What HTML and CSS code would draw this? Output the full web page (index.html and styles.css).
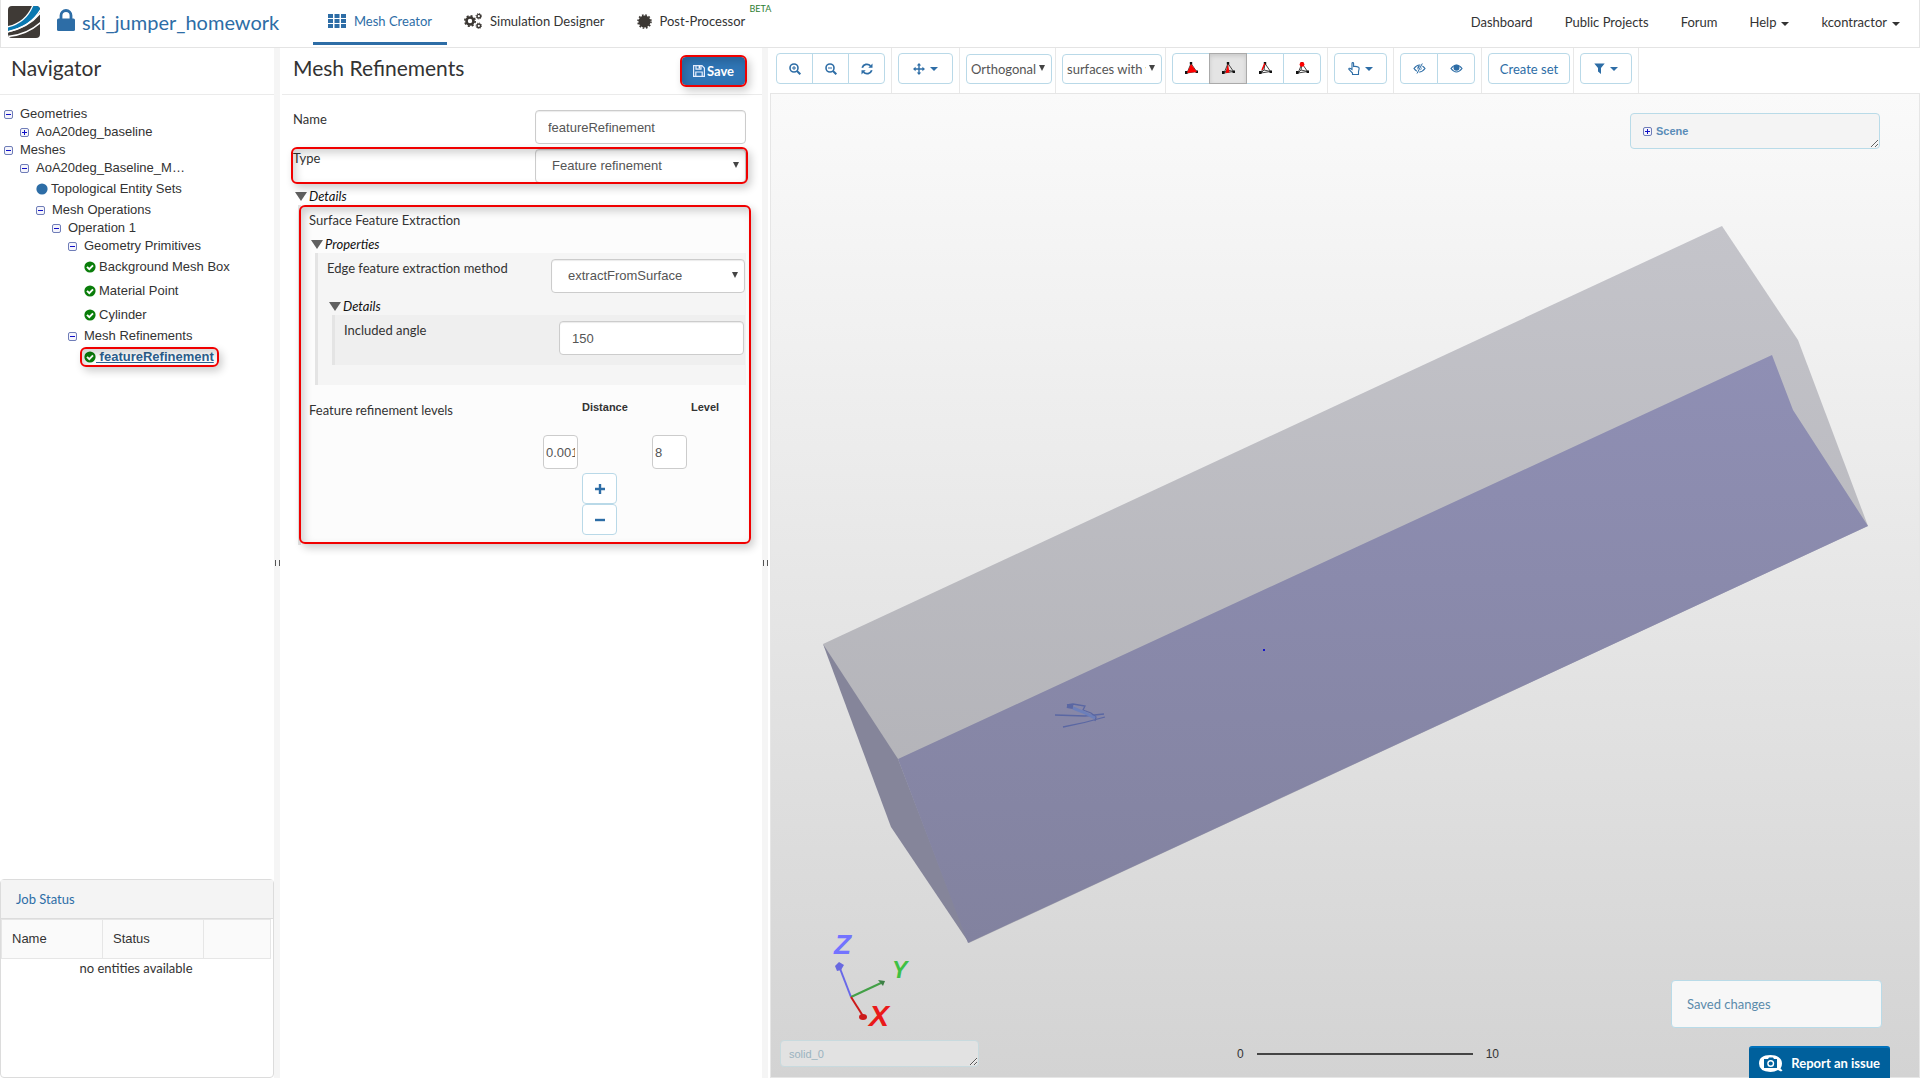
FILE: index.html
```html
<!DOCTYPE html>
<html lang="en">
<head>
<meta charset="utf-8">
<title>ski_jumper_homework - Mesh Creator</title>
<link rel="stylesheet" href="styles.css">
</head>
<body>
<svg class="defs" width="0" height="0" aria-hidden="true">
  <defs>
    <symbol id="check" viewBox="0 0 12 12"><circle cx="6" cy="6" r="5.6" fill="#0a7d0a"/><path d="M3 5.8l2.3 2.4L9 4.4" fill="none" stroke="#fff" stroke-width="1.9"/></symbol>
    <symbol id="minus-box" viewBox="0 0 9 9"><rect x=".5" y=".5" width="8" height="8" rx="1.5" fill="#f4f4fb" stroke="#6f7db8"/><path d="M2 4.5h5" stroke="#1010c8"/></symbol>
    <symbol id="plus-box" viewBox="0 0 9 9"><rect x=".5" y=".5" width="8" height="8" rx="1.5" fill="#f4f4fb" stroke="#6f7db8"/><path d="M2 4.5h5M4.500 2v5" stroke="#1010c8"/></symbol>
    <symbol id="tetra" viewBox="0 0 13 13"><path d="M6 1.500L2 11l9.500-1.500zM2 11l3-3 6.500 1.500M6 1.500L5 8" fill="none" stroke="#444" stroke-width="1"/><path d="M0 9h2.500v3H0zM10.500 8.500H13v2.500h-2.500zM4.800 0h2.400v2.500H4.800z" fill="#111"/></symbol>
  </defs>
</svg>

<header class="topbar">
  <a class="brand" href="#" aria-label="Home">
    <svg width="32" height="32" viewBox="0 0 32 32"><defs><clipPath id="logo-clip"><rect width="32" height="32" rx="4"/></clipPath></defs><g clip-path="url(#logo-clip)"><path fill="#3f3a36" d="M0 0h32v32H0z"/><path fill="#0a78b0" stroke="#fff" stroke-width="1.300" d="M-1 21Q18 17 25-1H34V1Q24 21-1 26z"/><path fill="none" stroke="#fff" stroke-width="1.500" d="M-1 26Q22 21 33 6M-1 30.500Q19 29 33 16"/></g></svg>
  </a>
  <a class="project" href="#">
    <svg width="18" height="22" viewBox="0 0 18 22"><path d="M4 11V6.500a5 5 0 0 1 10 0V11" fill="none" stroke="#2d6da6" stroke-width="2.800"/><rect y="9.500" width="18" height="12.500" rx="1.500" fill="#2d6da6"/></svg>
    <span>ski_jumper_homework</span>
  </a>
  <nav class="tabs">
    <a class="tab active" href="#"><svg width="18" height="14" viewBox="0 0 18 14"><path fill="#2d6da6" d="M0 0h5v4H0zM6.500 0h5v4h-5zM13 0h5v4h-5zM0 5h5v4H0zM6.500 5h5v4h-5zM13 5h5v4h-5zM0 10h5v4H0zM6.500 10h5v4h-5zM13 10h5v4h-5z"/></svg>Mesh Creator</a>
    <a class="tab" href="#"><svg width="18" height="16" viewBox="0 0 18 16"><g fill="none" stroke="#3b3733"><circle cx="6" cy="8" r="3.500" stroke-width="2.600"/><circle cx="6" cy="8" r="5.200" stroke-width="1.600" stroke-dasharray="2.040"/><circle cx="14.800" cy="3.200" r="1.800" stroke-width="1.400"/><circle cx="14.800" cy="3.200" r="2.800" stroke-width=".9" stroke-dasharray="1.100"/><circle cx="14.800" cy="12.800" r="1.800" stroke-width="1.400"/><circle cx="14.800" cy="12.800" r="2.800" stroke-width=".9" stroke-dasharray="1.100"/></g></svg>Simulation Designer</a>
    <a class="tab" href="#"><svg width="15" height="15" viewBox="0 0 15 15"><circle cx="7.500" cy="7.500" r="6" fill="#3b3733"/><circle cx="7.500" cy="7.500" r="6.500" fill="none" stroke="#3b3733" stroke-width="1.600" stroke-dasharray="1.700"/></svg>Post-Processor<small class="beta">BETA</small></a>
  </nav>
  <nav class="links">
    <a href="#">Dashboard</a><a href="#">Public Projects</a><a href="#">Forum</a>
    <a href="#">Help<i class="caret"></i></a><a href="#">kcontractor<i class="caret"></i></a>
  </nav>
</header>

<main class="workspace">
  <aside class="navigator">
    <h1 class="title">Navigator</h1>
    <ul class="tree">
      <li class="l0"><svg class="tg"><use href="#minus-box"/></svg>Geometries</li>
      <li class="l1"><svg class="tg"><use href="#plus-box"/></svg>AoA20deg_baseline</li>
      <li class="l0"><svg class="tg"><use href="#minus-box"/></svg>Meshes</li>
      <li class="l1"><svg class="tg"><use href="#minus-box"/></svg>AoA20deg_Baseline_M…</li>
      <li class="l2 leaf"><svg class="ck" viewBox="0 0 12 12"><circle cx="6" cy="6" r="5.600" fill="#2d6da6"/></svg>Topological Entity Sets</li>
      <li class="l2"><svg class="tg"><use href="#minus-box"/></svg>Mesh Operations</li>
      <li class="l3"><svg class="tg"><use href="#minus-box"/></svg>Operation 1</li>
      <li class="l4"><svg class="tg"><use href="#minus-box"/></svg>Geometry Primitives</li>
      <li class="l5 leaf"><svg class="ck"><use href="#check"/></svg>Background Mesh Box</li>
      <li class="l5 leaf"><svg class="ck"><use href="#check"/></svg>Material Point</li>
      <li class="l5 leaf"><svg class="ck"><use href="#check"/></svg>Cylinder</li>
      <li class="l4"><svg class="tg"><use href="#minus-box"/></svg>Mesh Refinements</li>
      <li class="l5 leaf"><a class="current marked" href="#"><svg class="ck"><use href="#check"/></svg><span>&nbsp;featureRefinement</span></a></li>
    </ul>
    <section class="jobs">
      <h2>Job Status</h2>
      <table>
        <thead><tr><th class="wide">Name</th><th class="wide">Status</th><th></th></tr></thead>
        <tbody><tr><td colspan="3">no entities available</td></tr></tbody>
      </table>
    </section>
  </aside>
  <div class="splitter"></div>

  <section class="editor">
    <div class="title bar"><h1>Mesh Refinements</h1>
      <button class="save marked"><svg width="12" height="12" viewBox="0 0 12 12"><path d="M.6.600h8.400l2.400 2.400v8.400H.6zM3 .6v3.600h5V.6M2.800 11.400V7h6.400v4.400" fill="none" stroke="#e8f0ff" stroke-width="1.200"/><path d="M5.600 1h1.600v2.500H5.600z" fill="#fff"/></svg>Save</button>
    </div>
    <form class="form">
      <div class="row"><label for="name">Name</label><input class="ctl" id="name" value="featureRefinement"></div>
      <div class="row type marked"><label for="type">Type</label><span class="select ctl"><select id="type"><option>Feature refinement</option></select></span></div>
      <div class="fold first">Details</div>
      <div class="block outer marked">
        <div class="text">Surface Feature Extraction</div>
        <div class="fold">Properties</div>
        <div class="block mid">
          <div class="row"><label for="method">Edge feature extraction method</label><span class="select ctl"><select id="method"><option>extractFromSurface</option></select></span></div>
          <div class="fold first">Details</div>
          <div class="block inner">
            <div class="row"><label for="angle">Included angle</label><input class="ctl" id="angle" value="150"></div>
          </div>
        </div>
        <div class="levels">
          <div class="text">Feature refinement levels</div>
          <table>
            <thead><tr><th>Distance</th><th>Level</th></tr></thead>
            <tbody>
              <tr><td><input class="tiny" aria-label="Distance" value="0.001"></td><td><input class="tiny" aria-label="Level" value="8"></td></tr>
              <tr><td colspan="2" class="steps">
                <button type="button" class="btn" aria-label="Add row"><svg width="10" height="10" viewBox="0 0 10 10"><path d="M0 5h10M5 0v10" stroke="#2d6da6" stroke-width="2.400"/></svg></button>
                <button type="button" class="btn" aria-label="Remove row"><svg width="10" height="10" viewBox="0 0 10 10"><path d="M0 5h10" stroke="#2d6da6" stroke-width="2.400"/></svg></button>
              </td></tr>
            </tbody>
          </table>
        </div>
      </div>
    </form>
  </section>
  <div class="splitter"></div>

  <section class="viewer">
    <div class="tools">
      <div class="set"><div class="group zooms">
        <button class="btn" aria-label="Zoom in"><svg width="12" height="12" viewBox="0 0 12 12"><g fill="none" stroke="#2d6da6"><circle cx="5" cy="5" r="4" stroke-width="1.600"/><path d="M8 8l3.300 3.300" stroke-width="2"/><path d="M3 5h4M5 3v4"/></g></svg></button>
        <button class="btn" aria-label="Zoom out"><svg width="12" height="12" viewBox="0 0 12 12"><g fill="none" stroke="#2d6da6"><circle cx="5" cy="5" r="4" stroke-width="1.600"/><path d="M8 8l3.300 3.300" stroke-width="2"/><path d="M3 5h4"/></g></svg></button>
        <button class="btn" aria-label="Refresh"><svg width="12" height="12" viewBox="0 0 12 12"><path d="M1.200 4.700A5 5 0 0 1 9.500 2.800M10.800 7.300A5 5 0 0 1 2.500 9.200" fill="none" stroke="#2d6da6" stroke-width="1.800"/><path d="M11.500.500v4.200H7.300zM.5 11.500V7.300h4.200z" fill="#2d6da6"/></svg></button>
      </div></div>
      <div class="set"><button class="btn move" aria-label="Move"><svg width="12" height="12" viewBox="0 0 12 12"><path d="M6 2v8M2 6h8" stroke="#2d6da6" stroke-width="1.400"/><path d="M6 0l2.200 2.600H3.800zM6 12l2.200-2.600H3.800zM0 6l2.600-2.200v4.400zM12 6L9.400 3.800v4.400z" fill="#2d6da6"/></svg><i class="caret"></i></button></div>
      <div class="set tight"><span class="select pick"><select aria-label="Projection"><option>Orthogonal</option></select></span></div>
      <div class="set tight"><span class="select pick long"><select aria-label="Render mode"><option>surfaces with vertices</option></select></span></div>
      <div class="set"><div class="group">
        <button class="btn" aria-label="Pick volumes"><svg width="13" height="13" viewBox="0 0 13 13"><use href="#tetra"/><path d="M6 2L2 11l10-1z" fill="#f00"/></svg></button>
        <button class="btn on" aria-label="Pick faces"><svg width="13" height="13" viewBox="0 0 13 13"><use href="#tetra"/><path d="M6 2L3.500 11l4-.5z" fill="#f00"/></svg></button>
        <button class="btn" aria-label="Pick edges"><svg width="13" height="13" viewBox="0 0 13 13"><use href="#tetra"/><path d="M5.800 1.500L3 8" stroke="#f00" stroke-width="1.400"/></svg></button>
        <button class="btn" aria-label="Pick nodes"><svg width="13" height="13" viewBox="0 0 13 13"><use href="#tetra"/><circle cx="6" cy="2.400" r="2.400" fill="#f00"/></svg></button>
      </div></div>
      <div class="set"><button class="btn hand" aria-label="Selection mode"><svg width="12" height="13" viewBox="0 0 12 13"><path d="M4 7.500V1.500q0-.9.800-.9t.8.900v3q2.700-.4 5 .8.700.4.500 1.700l-.6 2.500v3H4.500V11L1 7.500q-.5-.8.300-1.200.6-.2 1.200.2z" fill="#fff" stroke="#2d6da6" stroke-width="1.100"/></svg><i class="caret"></i></button></div>
      <div class="set"><div class="group">
        <button class="btn" aria-label="Hide"><svg width="13" height="11" viewBox="0 0 13 11"><path d="M1 5.500q5.500-7 11 0-5.500 7-11 0z" fill="none" stroke="#2d6da6" stroke-width="1.200"/><circle cx="6.500" cy="5" r="2.200" fill="#2d6da6"/><path d="M4 10.500l5.500-10" stroke="#fff" stroke-width="2.200"/><path d="M4 10.500L9.300.5" stroke="#2d6da6"/></svg></button>
        <button class="btn" aria-label="Show"><svg width="13" height="11" viewBox="0 0 13 11"><path d="M1 5.500q5.500-7 11 0-5.500 7-11 0z" fill="none" stroke="#2d6da6" stroke-width="1.200"/><circle cx="6.500" cy="4.800" r="3" fill="#2d6da6"/></svg></button>
      </div></div>
      <div class="set tight"><button class="btn label">Create set</button></div>
      <div class="set"><button class="btn filter" aria-label="Filter"><svg width="11" height="11" viewBox="0 0 11 11"><path d="M.3.500h10.400L7 5v6L4 8.500V5z" fill="#2d6da6"/></svg><i class="caret"></i></button></div>
    </div>

    <div class="canvas">
      <svg class="scene" viewBox="1 1 1148 983" aria-label="Mesh geometry">
        <defs>
          <linearGradient id="glass" x1="0" y1="0" x2="0" y2="1"><stop offset="0" stop-color="#c4c4ca"/><stop offset="1" stop-color="#afafb4"/></linearGradient>
          <linearGradient id="face" x1="0" y1="0" x2="0" y2="1"><stop offset="0" stop-color="#8f8fb4"/><stop offset="1" stop-color="#82829f"/></linearGradient>
        </defs>
        <path fill="url(#glass)" d="M53 551L952 133l76 114 70 186L199 850z"/>
        <path fill="#85859a" d="M53 551l75 115 71 184-78-116z"/>
        <path fill="url(#face)" d="M128 666l874-404 21 55 75 116-900 417z"/>
        <g fill="none" stroke="#5a67a3" stroke-width="1.300"><path d="M285 622l30 1 19-2M293 634q22-4 42-10M297 612l6-1 12 2-2 4 8 3 5 4-1 4"/><path d="M303 615l10 4 12 6" stroke="#6c7fba" stroke-width="3"/><path d="M297 613l6 1" stroke-width="4"/></g>
        <path fill="#1616c8" d="M493 556h2v2h-2z"/>
        <g fill="none" stroke-width="2"><path stroke="#6868e8" d="M81 904l-12-31"/><path stroke="#43a047" d="M81 904l30-14"/><path stroke="#cc1a1a" d="M81 904l12 19"/></g>
        <path fill="#6868e0" d="M65 873l4-4 5 3-3 5-4 1z"/><path fill="#3d8045" d="M108 887l7 1-2 5z"/><ellipse cx="93" cy="924" rx="4" ry="3" fill="#cc1a1a"/>
        <g class="axes"><text x="64" y="861" font-size="28" fill="#7373ff">Z</text><text x="122" y="885" font-size="23" fill="#3fc043">Y</text><text x="99" y="933" font-size="30" fill="#ea1a1a">X</text></g>
      </svg>
      <div class="tip scene-box"><svg class="tg"><use href="#plus-box"/></svg><b>Scene</b></div>
      <div class="tip hover-box">solid_0</div>
      <div class="scale"><span>0</span><i></i><span>10</span></div>
      <div class="tip toast">Saved changes</div>
    </div>
  </section>
</main>
<button class="report"><svg width="24" height="17" viewBox="0 0 24 17"><path d="M11.500 0C18 0 23 3 23 8.500q0 3-1.500 5l2 2-1.500 1-3-1.500Q15.500 17 11.500 17 0 16.500 0 8.500 0 0 11.500 0z" fill="#fff"/><path d="M5 4h4l1-1.500h4L15 4h3v9H5z" fill="#00609c"/><circle cx="11.700" cy="8.500" r="2.800" fill="none" stroke="#fff" stroke-width="1.400"/></svg>Report an issue</button>
</body>
</html>
```
FILE: styles.css
```css
* { box-sizing: border-box; }

body {
  margin: 0;
  height: 100vh;
  display: flex;
  flex-direction: column;
  font: 13px/18px Lato, "Liberation Sans", sans-serif;
  color: #333;
  background: #fff;
  overflow: hidden;
}

h1, h2 { margin: 0; font-weight: 400; }
a { color: inherit; text-decoration: none; }
svg { flex: none; }
button, input, select { font: inherit; color: inherit; margin: 0; }
.defs { position: absolute; }

.caret {
  display: inline-block;
  border: 4px solid transparent;
  border-top-color: currentColor;
  border-bottom: 0;
  margin-left: 5px;
  vertical-align: middle;
}

/* red frame around the items the guide points at */
.marked { position: relative; }
.marked::after {
  content: "";
  position: absolute;
  inset: -2px;
  border: 2px solid #f00000;
  border-radius: 6px;
  box-shadow: 3px 4px 8px rgba(0, 0, 0, .2), inset 3px 4px 8px rgba(0, 0, 0, .18);
  pointer-events: none;
}

/* top bar */
.topbar {
  flex: none;
  height: 48px;
  display: flex;
  align-items: flex-start;
  border: 1px solid #e4e4e4;
  border-top: 0;
}
.brand { padding: 6px 0 0 7px; height: 38px; }
.project {
  display: flex;
  gap: 7px;
  width: 256px;
  margin-left: 17px;
  padding-top: 9px;
  color: #2d6da6;
  font-size: 20px;
  line-height: 26px;
}
.tabs { display: flex; gap: 2px; }
.tab {
  display: flex;
  align-items: center;
  gap: 8px;
  height: 45px;
  padding: 0 15px;
  border-bottom: 3px solid transparent;
  position: relative;
}
.tab.active { color: #2d6da6; border-color: #2d6da6; }
.beta {
  position: absolute;
  top: 0;
  right: -11px;
  font-size: 9px;
  line-height: 17px;
  color: #2e7d32;
}
.links { display: flex; gap: 32px; margin-left: auto; padding: 13px 19px 0 0; }

/* columns */
.workspace {
  flex: 1;
  min-height: 0;
  display: grid;
  grid-template-columns: 274px 6px 482px 6px minmax(0, 1fr);
}
.splitter {
  background: #f5f5f5;
  display: flex;
  align-items: center;
  justify-content: center;
}
.splitter::after {
  content: "";
  width: 3px;
  height: 6px;
  border: solid #555;
  border-width: 0 1px;
}
.title {
  flex: none;
  height: 47px;
  padding: 5px 11px;
  border-bottom: 1px solid #ebebeb;
  font-size: 21px;
  line-height: 30px;
}

/* navigator */
.navigator { display: flex; flex-direction: column; min-height: 0; }
.tree {
  flex: 1;
  list-style: none;
  margin: 0;
  padding: 10px 0 0 4px;
  font-family: "Liberation Sans", Arial, sans-serif;
}
.tree li { display: flex; align-items: center; gap: 7px; height: 18px; white-space: nowrap; }
.tree .leaf { gap: 3px; height: 24px; }
.tree .l1 { padding-left: 16px; }
.tree .l2 { padding-left: 32px; }
.tree .l3 { padding-left: 48px; }
.tree .l4 { padding-left: 64px; }
.tree .l5 { padding-left: 80px; }
.tg { width: 9px; height: 9px; }
.ck { width: 12px; height: 12px; }
.current { display: flex; align-items: center; height: 18px; font-weight: 700; color: #2d6190; }
.current span { text-decoration: underline; }
.current::after { inset: -1px -5px -1px -4px; }

.jobs {
  flex: none;
  height: 199px;
  border: 1px solid #dcdcdc;
  border-radius: 4px;
}
.jobs h2 {
  height: 39px;
  padding: 10px 15px;
  background: #f4f4f4;
  border-bottom: 1px solid #dcdcdc;
  color: #2d6da6;
  font-size: 13px;
  line-height: 18px;
}
.jobs table { width: 270px; border-collapse: collapse; table-layout: fixed; }
.jobs th {
  height: 39px;
  padding: 0 10px;
  border: 1px solid #e6e6e6;
  background: #fafafa;
  font: 13px/18px "Liberation Sans", Arial, sans-serif;
  text-align: left;
}
.jobs .wide { width: 101px; }
.jobs td { padding: 0; text-align: center; }

/* editor */
.editor { padding-left: 2px; min-width: 0; }
.bar { display: flex; justify-content: space-between; padding-right: 17px; }
.bar h1 { font-size: 21px; }
.save {
  display: flex;
  align-items: center;
  gap: 2px;
  height: 28px;
  margin-top: 4px;
  padding: 0 11px;
  border: 0;
  border-radius: 4px;
  background: #2f75b5;
  color: #fff;
  font-size: 13px;
  font-weight: 700;
}
.form { padding: 15px 16px 0 11px; }
.row { display: flex; justify-content: space-between; align-items: flex-start; }
.type { margin-top: 5px; }
.type::after { bottom: -1px; }
.ctl {
  width: 211px;
  height: 34px;
  border: 1px solid #ccc;
  border-radius: 4px;
  background: #fff;
  color: #555;
  font-family: "Liberation Sans", Arial, sans-serif;
  box-shadow: inset 0 1px 1px rgba(0, 0, 0, .08);
}
input.ctl { padding: 0 12px; }
.select { position: relative; display: block; }
.select select {
  appearance: none;
  width: 100%;
  height: 100%;
  padding: 0 16px;
  border: 0;
  background: none;
}
.select::after {
  content: "";
  position: absolute;
  right: 6px;
  top: 50%;
  margin-top: -4px;
  border: 3px solid transparent;
  border-top: 6px solid #444;
  border-bottom: 0;
  pointer-events: none;
}
.fold {
  display: flex;
  align-items: center;
  gap: 2px;
  margin-top: 6px;
  padding-left: 2px;
  font: italic 13px/18px Lato, sans-serif;
  color: #111;
}
.fold.first { margin-top: 4px; }
.fold::before {
  content: "";
  border: 6px solid transparent;
  border-top: 9px solid #606060;
  border-bottom: 0;
}
.block { border-left: 3px solid #e4e4e4; }
.outer { margin-left: 5px; padding: 6px 0 10px 8px; background: #fcfcfc; }
.outer::after { inset: 0 -5px 1px -2px; }
.mid { margin-left: 6px; padding: 6px 1px 20px 9px; background: #f5f5f5; }
.mid .ctl { width: 194px; }
.inner { margin-left: 5px; padding: 6px 0 10px 9px; background: #efefef; }
.inner .ctl { width: 185px; }
.inner .row { padding-right: 1px; }
.levels { display: flex; justify-content: space-between; margin-top: 16px; }
.levels table { width: 203px; border-collapse: collapse; table-layout: fixed; }
.levels th {
  padding: 0 0 22px 39px;
  font: 700 11px/12px "Liberation Sans", Arial, sans-serif;
  text-align: left;
}
.levels th:first-child { width: 109px; }
.levels td { padding: 0; }
.tiny {
  display: block;
  width: 35px;
  height: 34px;
  padding: 0 2px;
  border: 1px solid #ccc;
  border-radius: 4px;
  color: #555;
  font-family: "Liberation Sans", Arial, sans-serif;
}
.levels .steps { padding: 4px 0 0 39px; }
.steps .btn { width: 35px; }

/* viewer */
.viewer { display: flex; flex-direction: column; min-width: 0; padding-left: 2px; }
.tools { flex: none; display: flex; height: 45px; }
.set { padding: 5px 6px 0; border-right: 1px solid #e8e8e8; }
.set.tight { padding-right: 3px; }
.group { display: flex; }
.btn {
  display: flex;
  align-items: center;
  justify-content: center;
  width: 38px;
  height: 31px;
  padding: 0;
  border: 1px solid #b9d9e8;
  border-radius: 4px;
  background: #fff;
  color: #2d6da6;
}
.group .btn { margin-left: -1px; border-radius: 0; }
.group .btn:first-child { margin-left: 0; border-radius: 4px 0 0 4px; }
.group .btn:last-child { border-radius: 0 4px 4px 0; }
.group .on { background: #e4e4e4; border-color: #aaa; box-shadow: inset 0 2px 4px rgba(0, 0, 0, .12); z-index: 1; }
.zooms .btn { width: 37px; }
.move { width: 55px; }
.hand { width: 53px; }
.filter { width: 52px; }
.label { width: 82px; }
.pick {
  width: 86px;
  height: 30px;
  margin-top: 1px;
  border: 1px solid #b9d9e8;
  border-radius: 4px;
  color: #555;
}
.pick.long { width: 100px; }
.pick select { padding: 0 15px 0 4px; }

.canvas {
  flex: 1;
  min-height: 0;
  position: relative;
  border: 1px solid #e6e6e6;
  background: linear-gradient(#fafafa, #d3d3d3);
}
.scene { display: block; width: 100%; height: 100%; }
.axes { font-family: "Liberation Sans", Arial, sans-serif; font-weight: 700; font-style: italic; }
.tip {
  position: absolute;
  border: 1px solid #b9dbe8;
  border-radius: 4px;
  overflow: hidden;
}
.scene-box {
  top: 19px;
  right: 39px;
  width: 250px;
  height: 36px;
  padding: 0 12px;
  display: flex;
  align-items: center;
  gap: 4px;
  background: #f4f4f4;
  color: #5a8cb8;
  font: 700 11px/18px "Liberation Sans", Arial, sans-serif;
  resize: both;
}
.hover-box {
  left: 9px;
  bottom: 10px;
  width: 199px;
  height: 27px;
  padding: 4px 8px;
  background: #e2e2e2;
  border-color: #c8dade;
  color: #9ab3c0;
  font: 11px/18px "Liberation Sans", Arial, sans-serif;
  resize: both;
}
.scale {
  position: absolute;
  left: 466px;
  bottom: 14px;
  display: flex;
  align-items: center;
  gap: 13px;
  font: 12px/18px "Liberation Sans", Arial, sans-serif;
}
.scale i { width: 216px; height: 2px; background: #444; }
.toast {
  right: 37px;
  bottom: 49px;
  width: 211px;
  height: 48px;
  padding: 14px 15px;
  background: #f7f7f7;
  color: #5b8bab;
}
.report {
  position: fixed;
  right: 30px;
  bottom: 0;
  display: flex;
  align-items: center;
  gap: 8px;
  height: 32px;
  padding: 0 10px;
  border: 0;
  border-top: 2px solid #0072bc;
  border-radius: 3px 3px 0 0;
  background: #00609c;
  color: #fff;
  font-weight: 700;
}
```
